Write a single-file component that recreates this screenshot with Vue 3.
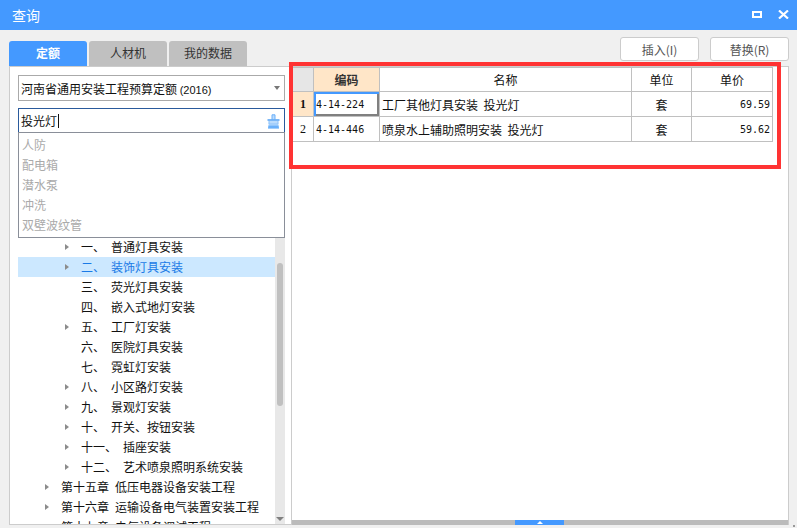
<template>
  <div class="window">
    <!-- 标题栏 -->
    <div class="titlebar">
      <span class="title">查询</span>
      <div class="win-btns">
        <svg width="10" height="7" viewBox="0 0 10 7"><path d="M1 1h8v5H1z" fill="none" stroke="#fff" stroke-width="2" /></svg>
        <svg width="11" height="9" viewBox="0 0 11 9"><path d="M1 .5l9 8M10 .5l-9 8" stroke="#fff" stroke-width="2.2" /></svg>
      </div>
    </div>

    <div class="main">
      <!-- 左侧定额树 -->
      <div class="left">
        <div class="tabs">
          <div
            v-for="tab in tabs"
            :key="tab"
            class="tab"
            :class="{ active: tab === activeTab }"
          >{{ tab }}</div>
        </div>
        <div class="left-panel">
          <div class="select">
            <span>河南省通用安装工程预算定额 <span class="year">(2016)</span></span>
            <i class="select-arrow"></i>
          </div>
          <div class="search-wrap">
            <div class="search">
              <span class="search-text">投光灯</span><i class="caret"></i>
              <svg class="brush" width="13" height="15" viewBox="0 0 13 15">
                <path d="M5 5.5V.8h3v4.7" fill="#bcdcfc" stroke="#6ab0fa" />
                <path d="M.5 6h12" stroke="#5aa5f5" stroke-width="1.6" />
                <path d="M2 7h9l1 7.5H1z" fill="#bcdcfc" />
                <path d="M2 7v3h9V7" fill="none" stroke="#8fc3fa" />
                <path d="M1.5 11.5h10l.5 3H1z" fill="#6ab0fa" />
              </svg>
            </div>
            <ul class="history">
              <li v-for="item in history" :key="item">{{ item }}</li>
            </ul>
          </div>
          <div class="tree-wrap">
            <!-- 树的前几行被历史下拉框盖住，这里只留出位置 -->
            <ul class="tree">
              <li
                v-for="row in treeRows"
                :key="row.no"
                class="tree-row"
                :class="['level-' + row.level, { selected: row.selected }]"
              >
                <i class="tree-arrow" :class="{ hidden: !row.arrow }"></i>
                <span class="tree-no">{{ row.no }}</span>
                <span>{{ row.name }}</span>
              </li>
            </ul>
            <div class="vscroll">
              <div class="vthumb"></div>
              <i class="vscroll-down"></i>
            </div>
          </div>
        </div>
      </div>

      <!-- 右侧结果 -->
      <div class="right">
        <div class="toolbar">
          <button class="tool-btn">插入(I)</button>
          <button class="tool-btn">替换(R)</button>
        </div>
        <div class="right-panel">
          <div class="table-area">
            <table class="grid">
              <colgroup>
                <col style="width: 21px" />
                <col style="width: 66px" />
                <col style="width: 252px" />
                <col style="width: 60px" />
                <col style="width: 81px" />
              </colgroup>
              <thead>
                <tr>
                  <th class="corner"></th>
                  <th class="current">编码</th>
                  <th>名称</th>
                  <th>单位</th>
                  <th>单价</th>
                </tr>
              </thead>
              <tbody>
                <tr v-for="(row, i) in rows" :key="row.code">
                  <td class="row-no" :class="{ current: i === 0 }">{{ i + 1 }}</td>
                  <td class="code" :class="{ active: i === 0 }">{{ row.code }}</td>
                  <td class="name">{{ row.name }}</td>
                  <td class="center">{{ row.unit }}</td>
                  <td class="price">{{ row.price }}</td>
                </tr>
              </tbody>
            </table>
          </div>
          <div class="hscroll">
            <div class="hthumb"><i></i></div>
          </div>
          <!-- 红色标注框 -->
          <div class="mark"></div>
        </div>
      </div>
    </div>
    <i class="grip"></i>
  </div>
</template>

<script setup>
import { ref } from 'vue'

const tabs = ['定额', '人材机', '我的数据']
const activeTab = ref('定额')

const history = ['人防', '配电箱', '潜水泵', '冲洗', '双壁波纹管']

const treeRows = [
  { level: 2, arrow: true, no: '一、', name: '普通灯具安装' },
  { level: 2, arrow: true, no: '二、', name: '装饰灯具安装', selected: true },
  { level: 2, arrow: false, no: '三、', name: '荧光灯具安装' },
  { level: 2, arrow: false, no: '四、', name: '嵌入式地灯安装' },
  { level: 2, arrow: true, no: '五、', name: '工厂灯安装' },
  { level: 2, arrow: false, no: '六、', name: '医院灯具安装' },
  { level: 2, arrow: false, no: '七、', name: '霓虹灯安装' },
  { level: 2, arrow: true, no: '八、', name: '小区路灯安装' },
  { level: 2, arrow: true, no: '九、', name: '景观灯安装' },
  { level: 2, arrow: true, no: '十、', name: '开关、按钮安装' },
  { level: 2, arrow: true, no: '十一、', name: '插座安装' },
  { level: 2, arrow: true, no: '十二、', name: '艺术喷泉照明系统安装' },
  { level: 1, arrow: true, no: '第十五章', name: '低压电器设备安装工程' },
  { level: 1, arrow: true, no: '第十六章', name: '运输设备电气装置安装工程' },
  { level: 1, arrow: true, no: '第十七章', name: '电气设备调试工程' }
]

const rows = [
  { code: '4-14-224', name: '工厂其他灯具安装  投光灯', unit: '套', price: '69.59' },
  { code: '4-14-446', name: '喷泉水上辅助照明安装  投光灯', unit: '套', price: '59.62' }
]
</script>

<style>
html,
body {
  margin: 0;
  background: #f0f0f0;
}
</style>

<style scoped>
.window {
  position: relative;
  display: flex;
  flex-direction: column;
  width: 797px;
  height: 528px;
  overflow: hidden;
  background: #f0f0f0;
  color: #111;
  font-family: "Noto Sans CJK SC", "Liberation Sans", sans-serif;
  font-size: 12px;
}

.titlebar {
  display: flex;
  align-items: center;
  justify-content: space-between;
  flex: none;
  height: 30px;
  padding: 0 8px 0 12px;
  background: #4499ff;
  color: #fff;
}

.title {
  font-size: 14px;
}

.win-btns {
  display: flex;
  align-items: center;
  gap: 16px;
  margin-top: -2px;
}

.win-btns svg {
  display: block;
}

.main {
  display: flex;
  flex: 1;
  min-height: 0;
  padding: 7px 8px 3px 9px;
}

.left {
  display: flex;
  flex-direction: column;
  flex: none;
  width: 282px;
  padding-top: 4px;
  box-sizing: border-box;
}

.tabs {
  display: flex;
  flex: none;
  gap: 2px;
  height: 25px;
}

.tab {
  width: 78px;
  line-height: 24px;
  text-align: center;
  border-radius: 3px 3px 0 0;
  background: #c0c0c0;
  color: #333;
}

.tab.active {
  background: #4499ff;
  color: #fff;
  font-weight: 700;
}

.left-panel {
  display: flex;
  flex-direction: column;
  flex: 1;
  min-height: 0;
  padding: 8px 6px 0 8px;
  border: 1px solid #ccc;
  border-right: none;
  background: #fff;
}

.select {
  display: flex;
  align-items: center;
  justify-content: space-between;
  flex: none;
  box-sizing: border-box;
  height: 26px;
  padding: 0 4px 0 2px;
  border: 1px solid #aaa;
}

.year {
  font-family: "Liberation Sans", sans-serif;
  font-size: 11px;
}

.select-arrow {
  width: 0;
  height: 0;
  border-top: 4px solid #777;
  border-left: 3.5px solid transparent;
  border-right: 3.5px solid transparent;
}

.search-wrap {
  position: relative;
  flex: none;
  margin-top: 7px;
}

.search {
  display: flex;
  align-items: center;
  box-sizing: border-box;
  height: 25px;
  padding: 0 4px 0 2px;
  border: 1px solid #2a5a9c;
}

.caret {
  width: 1px;
  height: 14px;
  margin-left: 1px;
  background: #111;
}

.brush {
  margin-left: auto;
  margin-top: 1px;
}

.history {
  position: absolute;
  top: 24px;
  left: 0;
  right: 0;
  z-index: 2;
  box-sizing: border-box;
  height: 106px;
  margin: 0;
  padding: 2px 3px 0;
  border: 1px solid #8a8f99;
  background: #fff;
  color: #aaa;
  list-style: none;
}

.history li {
  height: 20px;
  line-height: 20px;
}

.tree-wrap {
  display: flex;
  flex: 1;
  min-height: 0;
  overflow: hidden;
  padding-top: 104px;
}

.tree {
  flex: 1;
  min-width: 0;
  margin: 0;
  padding: 0;
  list-style: none;
}

.tree-row {
  display: flex;
  align-items: center;
  gap: 6px;
  box-sizing: border-box;
  height: 20px;
  padding-bottom: 2px;
  white-space: nowrap;
}

.tree-row.level-2 {
  padding-left: 47px;
}

.tree-row.level-1 {
  padding-left: 27px;
}

.tree-row.selected {
  background: #cce8ff;
  color: #1a7ae6;
}

.tree-arrow {
  flex: none;
  width: 0;
  height: 0;
  margin: 2px 6px 0 0;
  border-left: 4px solid #8c8c8c;
  border-top: 3.5px solid transparent;
  border-bottom: 3.5px solid transparent;
}

.tree-arrow.hidden {
  visibility: hidden;
}

.vscroll {
  position: relative;
  flex: none;
  box-sizing: border-box;
  width: 10px;
  padding: 26px 2px 0;
  background: #e8e8e8;
}

.vthumb {
  height: 143px;
  border-radius: 3px;
  background: #c0c0c0;
}

.vscroll-down {
  position: absolute;
  left: 1px;
  bottom: 3px;
  width: 0;
  height: 0;
  border-top: 4px solid #808080;
  border-left: 4px solid transparent;
  border-right: 4px solid transparent;
}

.right {
  display: flex;
  flex-direction: column;
  flex: 1;
  min-width: 0;
}

.toolbar {
  display: flex;
  justify-content: flex-end;
  gap: 11px;
  flex: none;
  height: 29px;
}

.tool-btn {
  width: 79px;
  height: 24px;
  padding: 0;
  border: 1px solid #ccc;
  border-radius: 3px;
  background: #fff;
  color: #555;
  font-family: inherit;
  font-size: 12px;
}

.right-panel {
  position: relative;
  display: flex;
  flex-direction: column;
  flex: 1;
  min-height: 0;
  border: 1px solid #ccc;
  border-bottom: none;
  background: #fff;
}

.table-area {
  flex: 1;
  min-height: 0;
}

.grid {
  width: 481px;
  border-collapse: collapse;
  table-layout: fixed;
}

.grid th,
.grid td {
  box-sizing: border-box;
  height: 25px;
  padding: 0 2px;
  border: 1px solid #c0c0c0;
  white-space: nowrap;
  overflow: hidden;
}

.grid th {
  height: 24px;
  font-weight: 400;
}

.grid th.corner {
  background: #e6e6e6;
}

.grid th.current {
  background: #ffe6c8;
  font-weight: 700;
  color: #333;
}

.grid td.name {
  white-space: pre;
}

.grid td.row-no {
  text-align: center;
  font-family: "Liberation Serif", serif;
}

.grid td.row-no.current {
  background: #ffe6c8;
  font-weight: 700;
}

.grid td.code {
  font-family: "DejaVu Sans Mono", monospace;
  font-size: 10px;
}

.grid td.active {
  box-shadow: inset 2px 2px 0 #4499ff, inset -2px -2px 0 #808080;
}

.grid td.center {
  text-align: center;
}

.grid td.price {
  padding-right: 2px;
  text-align: right;
  font-family: "DejaVu Sans Mono", monospace;
  font-size: 10px;
}

.hscroll {
  flex: none;
  height: 5px;
  padding-left: 223px;
  background: #bbb;
}

.hthumb {
  display: flex;
  justify-content: center;
  width: 49px;
  height: 5px;
  background: #4499ff;
}

.hthumb i {
  width: 0;
  height: 0;
  margin-top: 1px;
  border-bottom: 3px solid #fff;
  border-left: 3px solid transparent;
  border-right: 3px solid transparent;
}

.mark {
  position: absolute;
  top: -5px;
  left: -3px;
  box-sizing: border-box;
  width: 492px;
  height: 107px;
  border: 4px solid #ff3333;
  pointer-events: none;
}

.grip {
  position: absolute;
  right: 2px;
  bottom: 1px;
  width: 2px;
  height: 2px;
  background: #999;
}
</style>
